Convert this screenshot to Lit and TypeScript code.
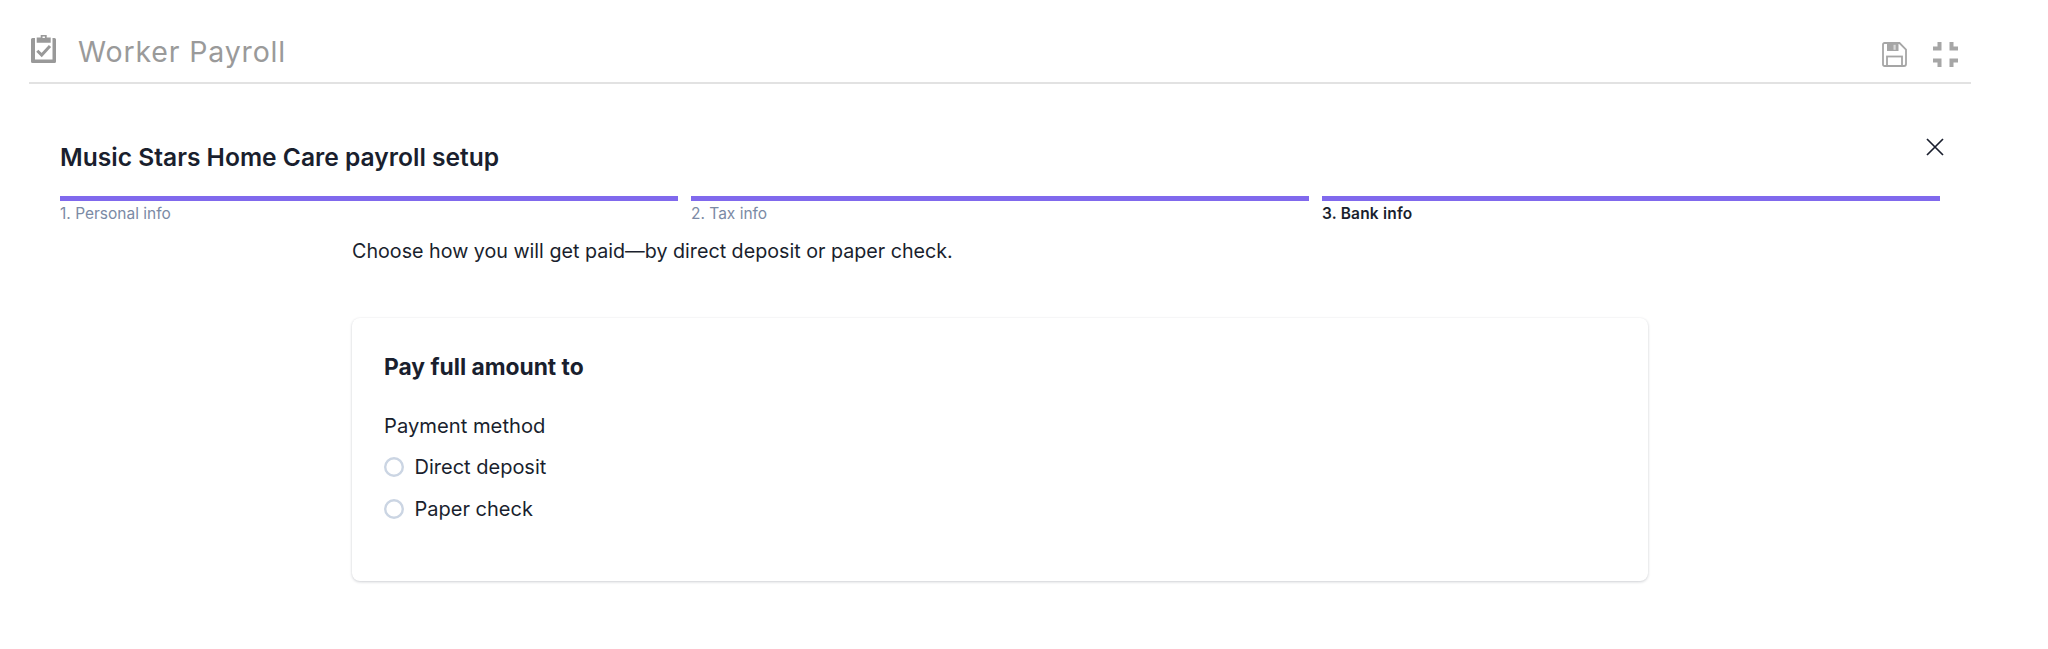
import { LitElement, html, css } from "lit";
import { customElement } from "lit/decorators.js";

const STEPS = [
  { label: "1. Personal info", active: false },
  { label: "2. Tax info", active: false },
  { label: "3. Bank info", active: true },
];

@customElement("app-root")
export class AppRoot extends LitElement {
  static styles = css`
    :host {
      display: block;
      height: 649px;
      background: #fff;
      font-family: Inter, "Liberation Sans", sans-serif;
      color: #1a1f2e;
      overflow: hidden;
    }
    .topbar {
      display: flex;
      align-items: center;
      height: 66px;
      padding-top: 16px;
      margin: 0 77px 0 29px;
      border-bottom: 2px solid #e2e2e2;
    }
    .logo {
      width: 25px;
      height: 28px;
      margin: 0 22px 0 2px;
    }
    .app-name {
      font-size: 28.5px;
      font-weight: 400;
      letter-spacing: 0.85px;
      color: #9a9a9a;
      flex: 1;
      padding-top: 4px;
    }
    .top-actions {
      display: flex;
      gap: 26px;
      margin-right: 13px;
      padding-top: 11px;
      align-items: center;
    }
    .top-actions svg {
      display: block;
      width: 25px;
      height: 25px;
    }
    .modal {
      padding: 0 108px 0 60px;
    }
    .modal-head {
      display: flex;
      justify-content: space-between;
      height: 112px;
      align-items: flex-start;
    }
    h1 {
      margin: 57px 0 0;
      font-size: 24.6px;
      line-height: 32px;
      font-weight: 600;
    }
    .close {
      width: 20px;
      height: 20px;
      margin: 53px -5px 0 0;
    }
    .steps {
      display: grid;
      grid-template-columns: repeat(3, 1fr);
      gap: 13px;
    }
    .bar {
      height: 5px;
      background: #8069ed;
    }
    .step-label {
      margin-top: 3.5px;
      font-size: 15.5px;
      line-height: 18px;
      color: #7b8aa5;
    }
    .step-label.active {
      color: #1a1f2e;
      font-weight: 600;
      letter-spacing: 0.2px;
    }
    .content {
      margin-left: 292px;
      width: 1296px;
    }
    .lead {
      margin: 14px 0 0;
      font-size: 19.7px;
      line-height: 28px;
      height: 81px;
    }
    .card {
      height: 263px;
      box-sizing: border-box;
      padding: 32px;
      border-radius: 8px;
      box-shadow: 0 1px 3px rgba(20, 30, 50, 0.2), 0 0 2px rgba(20, 30, 50, 0.04);
    }
    h2 {
      margin: 0 0 28px;
      font-size: 22.8px;
      line-height: 34px;
      font-weight: 700;
    }
    .field-label {
      font-size: 20.2px;
      line-height: 28px;
      margin-bottom: 7px;
    }
    .radio {
      display: flex;
      align-items: center;
      gap: 10.5px;
      height: 41.5px;
      font-size: 20px;
    }
    .dot {
      width: 20px;
      height: 20px;
      display: block;
    }
  `;

  radioDot() {
    return html`<svg class="dot" viewBox="0 0 20 20">
      <circle cx="10" cy="10" r="8.8" fill="none" stroke="#cbd5e3" stroke-width="2.4" />
    </svg>`;
  }

  render() {
    return html`
      <div class="topbar">
        <svg class="logo" viewBox="0 0 25 28">
          <path
            fill="#999"
            d="M1.500 3H4V24.500H21.500V3H23.500A1.500 1.500 0 0 1 25 4.500V26.500A1.500 1.500 0 0 1 23.500 28H1.500A1.500 1.500 0 0 1 0 26.500V4.500A1.500 1.500 0 0 1 1.500 3z"
          />
          <path
            fill="#999"
            fill-rule="evenodd"
            d="M5.700 2.500H9.700V0H15.700V2.500H19.700V7.700H5.700zM11.500 1.600V3H13.900V1.600z"
          />
          <path d="M6.300 15.700l4.400 4.300 8.300-9" fill="none" stroke="#999" stroke-width="3" />
        </svg>
        <div class="app-name">Worker Payroll</div>
        <div class="top-actions">
          <svg viewBox="0 0 25 25">
            <path
              fill="none"
              stroke="#a6a6a6"
              stroke-width="1.800"
              d="M2.500 1H17.500L24 7.500V22a2 2 0 0 1-2 2H2.500a1.500 1.500 0 0 1-1.500-1.500V2.500A1.500 1.500 0 0 1 2.500 1z"
            />
            <rect x="5" y="1.500" width="11.500" height="7.500" fill="#a6a6a6" />
            <rect x="11.500" y="2.800" width="2.200" height="5" fill="#d8d8d8" />
            <rect x="5" y="14.500" width="15" height="9.500" fill="none" stroke="#a6a6a6" stroke-width="1.800" />
          </svg>
          <svg viewBox="0 0 25 25">
            <path
              fill="#a6a6a6"
              d="M4.500 0h4v8.500H0v-4h4.500zM16.500 0h4v4.500H25v4h-8.500zM0 16.500h8.500V25h-4v-4.500H0zM16.500 16.500H25v4h-4.500V25h-4z"
            />
          </svg>
        </div>
      </div>
      <div class="modal">
        <div class="modal-head">
          <h1>Music Stars Home Care payroll setup</h1>
          <svg class="close" viewBox="0 0 20 20">
            <path d="M2 2l16 16M18 2L2 18" stroke="#1a1f2e" stroke-width="1.700" fill="none" />
          </svg>
        </div>
        <div class="steps">
          ${STEPS.map(
            (s) => html`
              <div>
                <div class="bar"></div>
                <div class="step-label ${s.active ? "active" : ""}">${s.label}</div>
              </div>
            `
          )}
        </div>
        <div class="content">
          <p class="lead">Choose how you will get paid—by direct deposit or paper check.</p>
          <div class="card">
            <h2>Pay full amount to</h2>
            <div class="field-label">Payment method</div>
            <div class="radio">${this.radioDot()}Direct deposit</div>
            <div class="radio">${this.radioDot()}Paper check</div>
          </div>
        </div>
      </div>
    `;
  }
}
